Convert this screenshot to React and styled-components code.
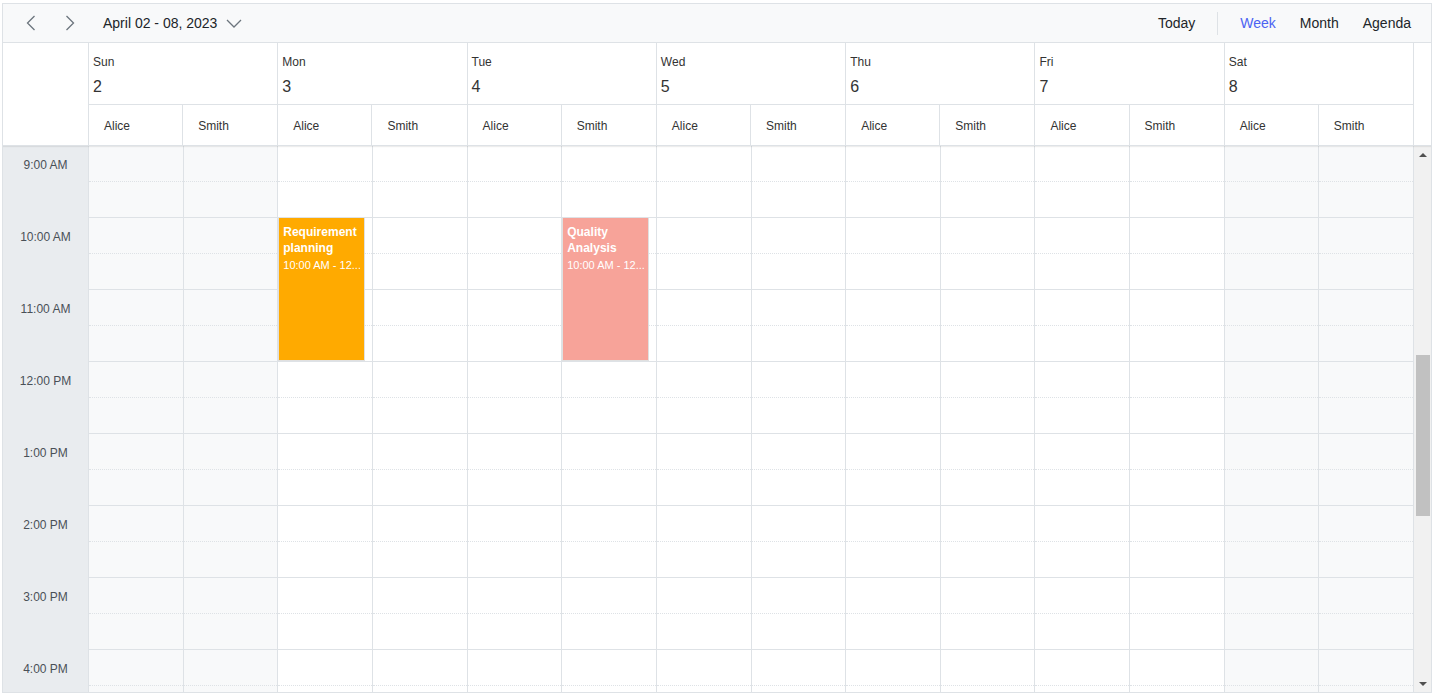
import React, { useLayoutEffect, useRef } from "react"
import styled, { createGlobalStyle } from "styled-components"

const HOUR = 72
const SLOT = 36
const VIEW = 545
const BTN = 17
const TIME_W = 86
const SCROLL_TOP = 9 * HOUR
const TOTAL = 24 * HOUR
const TRACK = VIEW - BTN * 2
const THUMB_H = Math.round((VIEW / TOTAL) * TRACK)
const THUMB_TOP = Math.round((SCROLL_TOP / TOTAL) * TRACK)

const days = [
  { name: "Sun", date: 2, weekend: true },
  { name: "Mon", date: 3 },
  { name: "Tue", date: 4 },
  { name: "Wed", date: 5 },
  { name: "Thu", date: 6 },
  { name: "Fri", date: 7 },
  { name: "Sat", date: 8, weekend: true },
]
const resources = ["Alice", "Smith"]

const events = [
  { day: 1, res: 0, title: "Requirement planning", time: "10:00 AM - 12...", start: 10, end: 12, color: "#ffaa00" },
  { day: 2, res: 1, title: "Quality Analysis", time: "10:00 AM - 12...", start: 10, end: 12, color: "#f7a399" },
]

const hourLabel = h => {
  const suffix = h < 12 ? "AM" : "PM"
  const hh = h % 12 === 0 ? 12 : h % 12
  return `${hh}:00 ${suffix}`
}

const GlobalStyle = createGlobalStyle`
  body {
    margin: 0;
    font-family: "Liberation Sans", "Noto Sans", Arial, sans-serif;
    color: #212529;
    background: #fff;
  }
`

const Scheduler = styled.div`
  margin: 3px 2px 0;
  height: 690px;
  box-sizing: border-box;
  border: 1px solid #dee2e6;
  display: flex;
  flex-direction: column;
  overflow: hidden;
`

const Toolbar = styled.div`
  height: 39px;
  flex: none;
  box-sizing: border-box;
  background: #f8f9fa;
  border-bottom: 1px solid #dee2e6;
  display: flex;
  align-items: center;
  padding: 0 8px 0 12px;
`

const IconButton = styled.button`
  width: 32px;
  height: 30px;
  border: 0;
  background: transparent;
  display: flex;
  align-items: center;
  justify-content: center;
  padding: 0;
  margin-right: 7px;
`

const DateButton = styled.button`
  border: 0;
  background: transparent;
  font: inherit;
  font-size: 14px;
  color: #212529;
  display: flex;
  align-items: center;
  gap: 9px;
  padding: 0 8px;
  margin-left: 2px;
`

const Spacer = styled.div`
  flex: 1;
`

const ViewButton = styled.button`
  border: 0;
  background: transparent;
  font: inherit;
  font-size: 14px;
  padding: 6px 12px;
  color: ${p => (p.active ? "#4c63f2" : "#212529")};
`

const Separator = styled.div`
  width: 1px;
  height: 23px;
  background: #dee2e6;
  margin: 0 10px;
`

const Header = styled.div`
  flex: none;
  display: flex;
  padding-right: ${BTN}px;
  border-bottom: 1px solid #dee2e6;
  box-shadow: 0 1px 1px rgba(0, 0, 0, 0.07);
  position: relative;
  z-index: 1;
`

const Corner = styled.div`
  width: ${TIME_W}px;
  flex: none;
  box-sizing: border-box;
  border-right: 1px solid #dee2e6;
`

const DayHeads = styled.div`
  flex: 1;
  display: grid;
  grid-template-columns: repeat(7, 1fr);
`

const DayHead = styled.div`
  border-right: 1px solid #dee2e6;
  display: flex;
  flex-direction: column;
`

const DayTitle = styled.div`
  height: 62px;
  box-sizing: border-box;
  border-bottom: 1px solid #dee2e6;
  padding: 11px 0 0 4px;
`

const DayName = styled.div`
  font-size: 12px;
  line-height: 16px;
  color: #333;
`

const DayNumber = styled.div`
  font-size: 16px;
  line-height: 20px;
  margin-top: 7px;
  color: #333;
`

const ResourceRow = styled.div`
  display: grid;
  grid-template-columns: 1fr 1fr;
  height: 40px;
`

const ResourceHead = styled.div`
  font-size: 12px;
  color: #333;
  padding: 2px 0 0 15px;
  display: flex;
  align-items: center;
  border-right: ${p => (p.last ? "0" : "1px solid #dee2e6")};
`

const Viewport = styled.div`
  flex: 1;
  display: flex;
  min-height: 0;
`

const Body = styled.div`
  flex: 1;
  overflow: hidden;
`

const Grid = styled.div`
  display: flex;
  align-items: flex-start;
`

const Scrollbar = styled.div`
  width: ${BTN}px;
  flex: none;
  background: #f1f1f1;
  display: flex;
  flex-direction: column;
`

const ScrollButton = styled.div`
  height: ${BTN}px;
  flex: none;
  display: flex;
  align-items: center;
  justify-content: center;
`

const Arrow = styled.div`
  width: 0;
  height: 0;
  border-left: 4px solid transparent;
  border-right: 4px solid transparent;
  ${p => (p.up ? "border-bottom: 4px solid #505050;" : "border-top: 4px solid #505050;")}
`

const Track = styled.div`
  flex: 1;
  padding: 0 1px 0 2px;
`

const Thumb = styled.div`
  background: #c1c1c1;
  margin-top: ${p => p.top}px;
  height: ${p => p.size}px;
`

const TimeColumn = styled.div`
  width: ${TIME_W}px;
  flex: none;
  box-sizing: border-box;
  background: #e9ecef;
  border-right: 1px solid #dee2e6;
`

const TimeCell = styled.div`
  height: ${HOUR}px;
`

const TimeLabel = styled.div`
  height: ${SLOT}px;
  padding-top: 2px;
  box-sizing: border-box;
  display: flex;
  align-items: center;
  justify-content: center;
  font-size: 12px;
  color: #495057;
`

const DayColumns = styled.div`
  flex: 1;
  display: grid;
  grid-template-columns: repeat(14, 1fr);
`

const ResourceColumn = styled.div`
  position: relative;
  border-right: 1px solid #dee2e6;
`

const Slot = styled.div`
  height: ${SLOT}px;
  box-sizing: border-box;
  background: ${p => (p.work ? "#fff" : "#f8f9fa")};
  border-bottom: 1px ${p => (p.half ? "dotted" : "solid")} #dee2e6;
`

const Event = styled.div`
  position: absolute;
  left: 0;
  right: 7px;
  box-sizing: border-box;
  background: ${p => p.color};
  border: 1px solid #e0e0e0;
  border-top: 0;
  color: #fff;
  padding: 6px 4px 4px;
  overflow: hidden;
`

const EventTitle = styled.div`
  font-size: 12px;
  font-weight: bold;
  line-height: 16px;
`

const EventTime = styled.div`
  font-size: 11px;
  line-height: 16px;
  margin-top: 1px;
  white-space: nowrap;
  overflow: hidden;
`

const Chevron = ({ dir }) => (
  <svg width="10" height="16" viewBox="0 0 10 16" fill="none" stroke="#6c757d" strokeWidth="1.3">
    {dir === "left" ? <polyline points="8.5,1 1.5,8 8.5,15" /> : <polyline points="1.5,1 8.5,8 1.5,15" />}
  </svg>
)

const Caret = () => (
  <svg width="16" height="9" viewBox="0 0 16 9" fill="none" stroke="#6c757d" strokeWidth="1.3">
    <polyline points="1,1 8,8 15,1" />
  </svg>
)

const hours = Array.from({ length: 24 }, (_, i) => i)

const App = () => {
  const bodyRef = useRef(null)

  useLayoutEffect(() => {
    if (bodyRef.current) bodyRef.current.scrollTop = SCROLL_TOP
  }, [])

  return (
    <>
      <GlobalStyle />
      <Scheduler>
        <Toolbar>
          <IconButton aria-label="Previous">
            <Chevron dir="left" />
          </IconButton>
          <IconButton aria-label="Next">
            <Chevron dir="right" />
          </IconButton>
          <DateButton>
            April 02 - 08, 2023
            <Caret />
          </DateButton>
          <Spacer />
          <ViewButton>Today</ViewButton>
          <Separator />
          <ViewButton active>Week</ViewButton>
          <ViewButton>Month</ViewButton>
          <ViewButton>Agenda</ViewButton>
        </Toolbar>

        <Header>
          <Corner />
          <DayHeads>
            {days.map(d => (
              <DayHead key={d.name}>
                <DayTitle>
                  <DayName>{d.name}</DayName>
                  <DayNumber>{d.date}</DayNumber>
                </DayTitle>
                <ResourceRow>
                  {resources.map((r, i) => (
                    <ResourceHead key={r} last={i === resources.length - 1}>
                      {r}
                    </ResourceHead>
                  ))}
                </ResourceRow>
              </DayHead>
            ))}
          </DayHeads>
        </Header>

        <Viewport>
          <Body ref={bodyRef}>
            <Grid>
              <TimeColumn>
                {hours.map(h => (
                  <TimeCell key={h}>
                    <TimeLabel>{hourLabel(h)}</TimeLabel>
                  </TimeCell>
                ))}
              </TimeColumn>
              <DayColumns>
                {days.map((d, di) =>
                  resources.map((r, ri) => (
                    <ResourceColumn key={`${d.name}-${r}`}>
                      {hours.map(h =>
                        [0, 1].map(half => (
                          <Slot key={`${h}-${half}`} half={half === 0} work={!d.weekend && h >= 9 && h < 18} />
                        ))
                      )}
                      {events
                        .filter(e => e.day === di && e.res === ri)
                        .map(e => (
                          <Event
                            key={e.title}
                            color={e.color}
                            style={{ top: e.start * HOUR, height: (e.end - e.start) * HOUR - 1 }}
                          >
                            <EventTitle>{e.title}</EventTitle>
                            <EventTime>{e.time}</EventTime>
                          </Event>
                        ))}
                    </ResourceColumn>
                  ))
                )}
              </DayColumns>
            </Grid>
          </Body>
          <Scrollbar>
            <ScrollButton>
              <Arrow up />
            </ScrollButton>
            <Track>
              <Thumb top={THUMB_TOP} size={THUMB_H} />
            </Track>
            <ScrollButton>
              <Arrow />
            </ScrollButton>
          </Scrollbar>
        </Viewport>
      </Scheduler>
    </>
  )
}

export default App
